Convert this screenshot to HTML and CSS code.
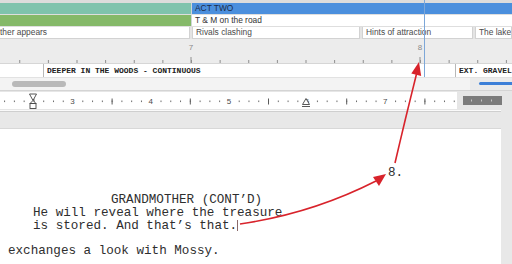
FILE: index.html
```html
<!DOCTYPE html>
<html lang="en">
<head>
    <meta charset="UTF-8">
    <title>Script Outline</title>
    <link rel="stylesheet" href="styles.css">
</head>
<body>
    <div class="app">
        <div class="topstrip"></div>

        <div class="beat-row">
            <div class="beat act-one"></div>
            <div class="beat act-two">ACT TWO</div>
        </div>
        <div class="beat-row">
            <div class="beat seq-one"></div>
            <div class="beat seq-two">T &amp; M on the road</div>
        </div>
        <div class="beat-row cards">
            <div class="card card-a">ther appears</div>
            <div class="card card-b">Rivals clashing</div>
            <div class="card card-c">Hints of attraction</div>
            <div class="card card-d">The lake</div>
        </div>

        <div class="timeline">
            <svg width="512" height="24">
                <defs>
                    <pattern id="pageTicks" x="19.25" y="0" width="28.625" height="24" patternUnits="userSpaceOnUse">
                        <rect x="0" y="21" width="1" height="3" fill="#8d8d8d"/>
                    </pattern>
                </defs>
                <rect x="0" y="0" width="512" height="24" fill="url(#pageTicks)"/>
                <rect x="190.5" y="18" width="1" height="6" fill="#8d8d8d"/>
                <rect x="419.5" y="18" width="1" height="6" fill="#8d8d8d"/>
                <text x="191" y="11" class="tl-num">7</text>
                <text x="420" y="11" class="tl-num">8</text>
            </svg>
        </div>

        <div class="scenes">
            <div class="scene scene-prev"></div>
            <div class="scene scene-cur">DEEPER IN THE WOODS - CONTINUOUS</div>
            <div class="scene scene-next">EXT. GRAVEL</div>
        </div>

        <div class="hscroll">
            <div class="track"><div class="thumb"></div></div>
            <div class="zoom"><div class="zoom-bar"></div></div>
        </div>

        <div class="ruler">
            <svg class="ruler-scale" width="457" height="17">
                <defs>
                    <pattern id="eighths" x="4.1" y="0" width="9.775" height="17" patternUnits="userSpaceOnUse">
                        <rect x="0" y="8.5" width="1" height="1.6" fill="#6a6a6a"/>
                    </pattern>
                    <pattern id="halves" x="33.4" y="0" width="78.2" height="17" patternUnits="userSpaceOnUse">
                        <rect x="0" y="6.5" width="1" height="6" fill="#5a5a5a"/>
                    </pattern>
                </defs>
                <rect x="0" y="0" width="457" height="17" fill="#fff"/>
                <rect x="0" y="0" width="457" height="17" fill="url(#eighths)"/>
                <rect x="0" y="0" width="457" height="17" fill="url(#halves)"/>
                <text x="72.5" y="12" class="ru-num">3</text>
                <text x="150.7" y="12" class="ru-num">4</text>
                <text x="228.9" y="12" class="ru-num">5</text>
                <text x="307.1" y="12" class="ru-num">6</text>
                <text x="385.3" y="12" class="ru-num">7</text>
                <g class="marker">
                    <polygon points="29.5,2 36.5,2 33,8.5"/>
                    <polygon points="33,8.5 30,11.5 36,11.5"/>
                    <rect x="30" y="11.5" width="6" height="5"/>
                    <polygon points="306,6.5 302.5,12.5 309.5,12.5"/>
                    <line x1="302" y1="14.5" x2="310" y2="14.5"/>
                </g>
            </svg>
            <div class="ruler-end">
                <svg width="39" height="9">
                    <rect x="8" y="3.5" width="1" height="2" fill="#c4c4c4"/>
                    <rect x="18" y="3.5" width="1" height="2" fill="#c4c4c4"/>
                    <rect x="28" y="3.5" width="1" height="2" fill="#c4c4c4"/>
                </svg>
            </div>
        </div>

        <div class="prev-edge"></div>

        <div class="page">
            <div class="page-num">8.</div>
            <div class="character">GRANDMOTHER (CONT’D)</div>
            <div class="dialogue">He will reveal where the treasure<br>is stored. And that’s that.<span class="caret"></span></div>
            <div class="action">exchanges a look with Mossy.</div>
        </div>

        <!-- playhead and callout arrows drawn over the editor -->
        <svg class="annotations" width="512" height="264">
            <line x1="424.5" y1="0" x2="424.5" y2="77" stroke="#7da7d8" stroke-width="1"/>
            <path d="M240 224 Q312 213.5 376 181" fill="none" stroke="#d8232b" stroke-width="1.6"/>
            <polygon points="386,174 373,177 379,186" fill="#d8232b"/>
            <path d="M395 163 Q405 120 416.5 74" fill="none" stroke="#d8232b" stroke-width="1.6"/>
            <polygon points="419,62 411.3,73.6 421.2,75.9" fill="#d8232b"/>
        </svg>
    </div>
</body>
</html>
```

FILE: styles.css
```css
body {
    margin: 0;
    overflow: hidden;
    font-family: "Liberation Sans", Arial, sans-serif;
}
.app {
    position: relative;
    width: 512px;
    height: 264px;
    background-color: #e8e8e8;
    overflow: hidden;
}
.topstrip {
    height: 3px;
    background-color: #dcdcdc;
}
.beat-row {
    display: flex;
    height: 11px;
    border-bottom: 1px solid #dedede;
}
.beat {
    font-size: 8.4px;
    line-height: 11px;
    color: #333;
    padding-left: 3px;
    white-space: nowrap;
}
.act-one, .seq-one {
    width: 188px;
    border-right: 1px solid #cfd6d8;
}
.act-one {
    background-color: #7fc3ad;
}
.seq-one {
    background-color: #85b969;
}
.act-two {
    flex: 1;
    background-color: #4b8fdd;
    color: #1c2c48;
}
.seq-two {
    flex: 1;
    background-color: #fff;
}
.cards {
    gap: 2px;
    background-color: #e4e4e4;
    border-bottom: none;
    height: 12px;
}
.card {
    background-color: #fff;
    border: 1px solid #d2d2d2;
    border-top: none;
    font-size: 8.4px;
    line-height: 11px;
    color: #4a4a4a;
    padding-left: 3px;
    white-space: nowrap;
    overflow: hidden;
}
.card-a {
    width: 189px;
    border-left: none;
    padding-left: 0;
}
.card-b {
    width: 163px;
}
.card-c {
    width: 106px;
}
.card-d {
    flex: 1;
}
.timeline {
    height: 24px;
    background-color: #ececec;
}
.timeline svg, .ruler svg {
    display: block;
}
.tl-num {
    font-family: "Liberation Sans", Arial, sans-serif;
    font-size: 8px;
    fill: #8a8a8a;
    text-anchor: middle;
}
.scenes {
    display: flex;
    height: 13px;
    background-color: #fff;
    border-top: 1px solid #d6d6d6;
}
.scene {
    font-family: "Liberation Mono", "Courier New", monospace;
    font-weight: bold;
    font-size: 8px;
    line-height: 13px;
    color: #222;
    padding-left: 3px;
    white-space: nowrap;
}
.scene-prev {
    width: 40px;
    border-right: 1px solid #b8b8b8;
}
.scene-cur {
    width: 408px;
    border-right: 1px solid #b8b8b8;
}
.scene-next {
    flex: 1;
}
.hscroll {
    display: flex;
    height: 12px;
    background-color: #f3f3f3;
    border-top: 1px solid #e2e2e2;
    border-bottom: 1px solid #d4d4d4;
}
.track {
    flex: 1;
    padding: 3px 0 0 12px;
}
.thumb {
    width: 54px;
    height: 6px;
    border-radius: 3px;
    background-color: #b9b9b9;
}
.zoom {
    width: 33px;
    background-color: #ebebeb;
    padding: 4px 0 0 9px;
}
.zoom-bar {
    height: 3px;
    border-radius: 2px 0 0 2px;
    background-color: #3d80d8;
}
.ruler {
    display: flex;
    height: 18px;
    padding-top: 1px;
    background-color: #e6e6e6;
}
.ru-num {
    font-family: "Liberation Sans", Arial, sans-serif;
    font-size: 8px;
    fill: #4a4a4a;
    text-anchor: middle;
    stroke: #fff;
    stroke-width: 2.5px;
    paint-order: stroke;
}
.marker polygon, .marker rect, .marker line {
    fill: #fff;
    stroke: #444;
    stroke-width: 0.9;
}
.ruler-end {
    width: 39px;
    height: 9px;
    margin: 4px 0 0 6px;
    background-color: #7b7b7b;
}
.prev-edge {
    width: 501px;
    height: 1px;
    background-color: #fafafa;
    border-bottom: 1px solid #cfcfcf;
}
.page {
    width: 501px;
    height: 140px;
    margin-top: 16px;
    background-color: #fff;
    border-top: 1px solid #d8d8d8;
    padding-top: 38px;
    font-family: "Liberation Mono", "Courier New", monospace;
    font-size: 12.6px;
    line-height: 12.7px;
    color: #2e2e2e;
    white-space: nowrap;
}
.page-num {
    padding-left: 388px;
    margin-bottom: 14.6px;
}
.character {
    padding-left: 111px;
}
.dialogue {
    padding-left: 33px;
}
.action {
    padding-left: 8px;
    margin-top: 12.7px;
}
.caret {
    display: inline-block;
    width: 0;
    height: 11px;
    border-left: 1px solid #8a6a6a;
    vertical-align: -2px;
}
.annotations {
    position: absolute;
    top: 0;
    left: 0;
    pointer-events: none;
}
```
